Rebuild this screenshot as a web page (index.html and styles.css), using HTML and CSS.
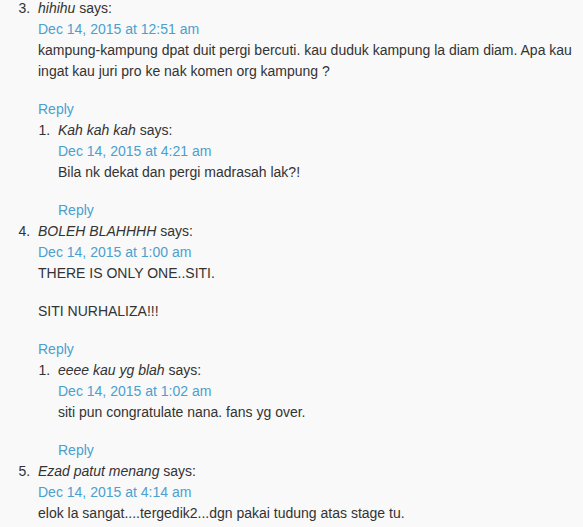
FILE: index.html
```html
<!DOCTYPE html>
<html>
<head>
  <title>Comments</title>
  <link rel="stylesheet" href="styles.css">
</head>
<body>
  <ol class="comment-list" start="3">
    <li class="comment">
      <div class="comment-author"><cite>hihihu</cite> says:</div>
      <div class="comment-meta"><a href="#">Dec 14, 2015 at 12:51 am</a></div>
      <p>kampung-kampung dpat duit pergi bercuti. kau duduk kampung la diam diam. Apa kau ingat kau juri pro ke nak komen org kampung ?</p>
      <div class="reply"><a href="#">Reply</a></div>
      <ol class="children">
        <li class="comment">
          <div class="comment-author"><cite>Kah kah kah</cite> says:</div>
          <div class="comment-meta"><a href="#">Dec 14, 2015 at 4:21 am</a></div>
          <p>Bila nk dekat dan pergi madrasah lak?!</p>
          <div class="reply"><a href="#">Reply</a></div>
        </li>
      </ol>
    </li>
    <li class="comment">
      <div class="comment-author"><cite>BOLEH BLAHHHH</cite> says:</div>
      <div class="comment-meta"><a href="#">Dec 14, 2015 at 1:00 am</a></div>
      <p>THERE IS ONLY ONE..SITI.</p>
      <p>SITI NURHALIZA!!!</p>
      <div class="reply"><a href="#">Reply</a></div>
      <ol class="children">
        <li class="comment">
          <div class="comment-author"><cite>eeee kau yg blah</cite> says:</div>
          <div class="comment-meta"><a href="#">Dec 14, 2015 at 1:02 am</a></div>
          <p>siti pun congratulate nana. fans yg over.</p>
          <div class="reply"><a href="#">Reply</a></div>
        </li>
      </ol>
    </li>
    <li class="comment">
      <div class="comment-author"><cite>Ezad patut menang</cite> says:</div>
      <div class="comment-meta"><a href="#">Dec 14, 2015 at 4:14 am</a></div>
      <p>elok la sangat....tergedik2...dgn pakai tudung atas stage tu.</p>
    </li>
  </ol>
</body>
</html>
```

FILE: styles.css
```css
body {
  font-family: "Liberation Sans", Arial, sans-serif;
  font-size: 14px;
  line-height: 21px;
  color: #333;
  background-color: #f9f9f9;
  margin: 0;
  padding: 0 10px 0 0;
}

a {
  color: #4aa0cf;
  text-decoration: none;
}

.comment-list {
  margin: -2px 0 0 0;
  padding-left: 38px;
}

.children {
  margin: 0;
  padding-left: 20px;
}

.comment::marker {
  content: counter(list-item) ".\00a0\00a0";
}

.comment cite {
  font-style: italic;
}

.comment p {
  margin: 0 0 17px 0;
}
```
